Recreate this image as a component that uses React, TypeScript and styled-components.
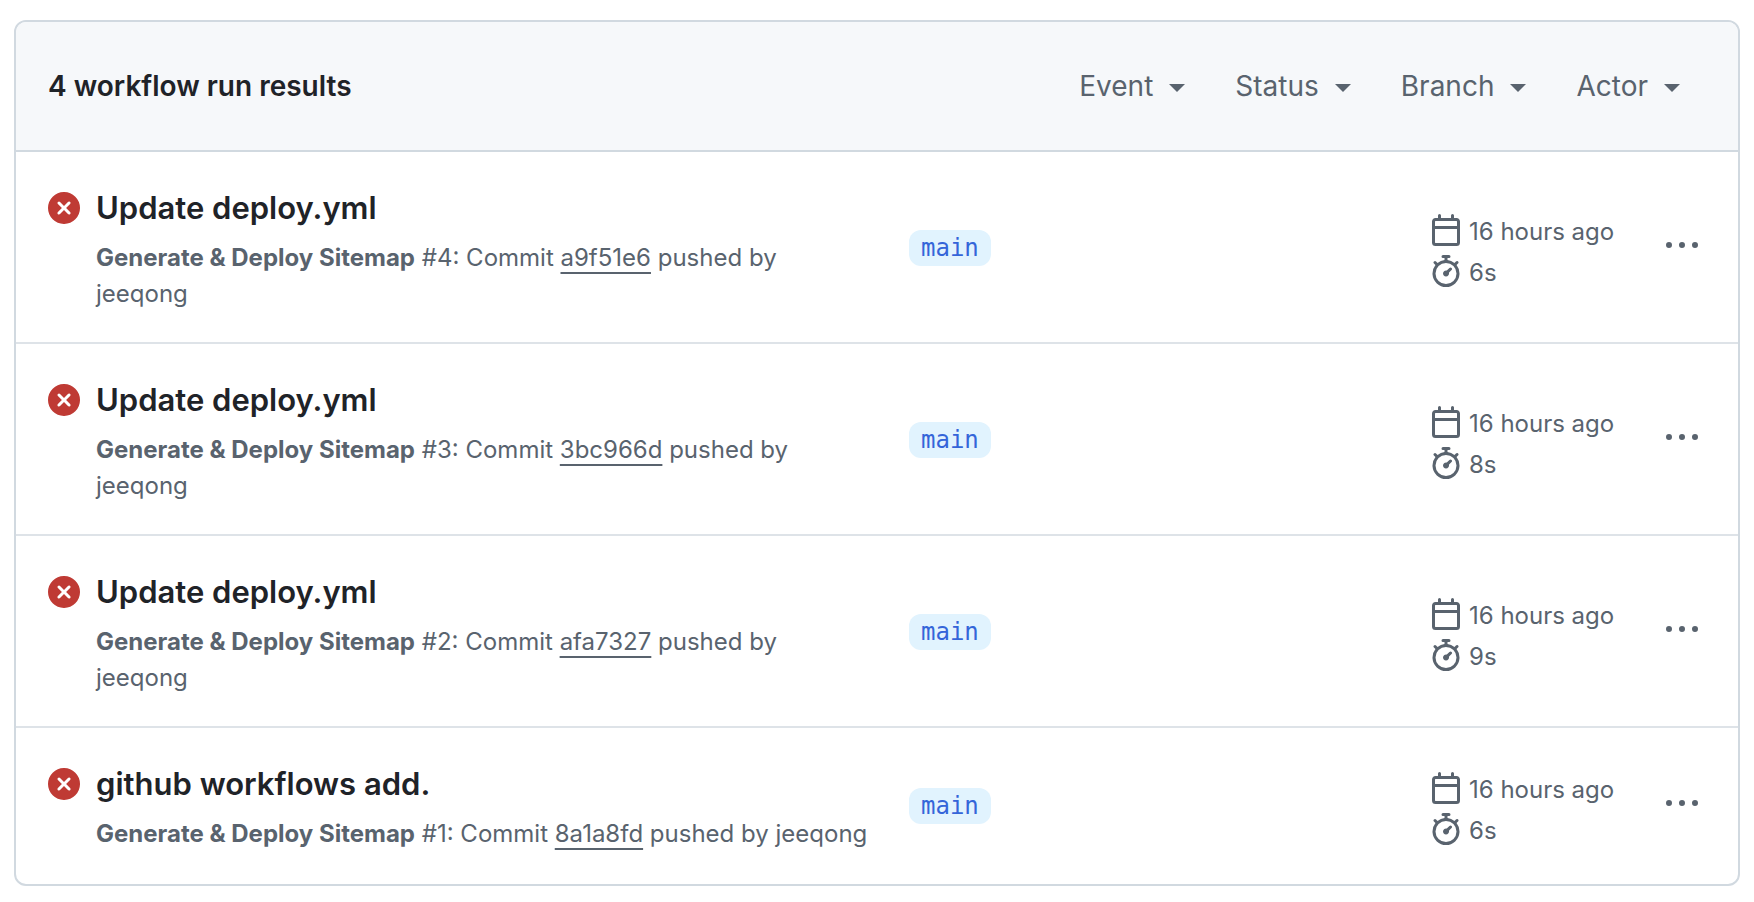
import React from 'react';
import styled, { createGlobalStyle } from 'styled-components';

const color = {
  text: '#1f2328',
  muted: '#59636e',
  border: '#d1d9e0',
  divider: '#dee3e8',
  header: '#f6f8fa',
  danger: '#bf3a34',
  labelBg: '#e1f3fe',
  labelText: '#3465d9',
};

const GlobalStyle = createGlobalStyle`
  *, *::before, *::after { box-sizing: border-box; }
  body {
    margin: 0;
    background: #ffffff;
    color: ${color.text};
    font-family: Inter, 'Liberation Sans', sans-serif;
  }
`;

const Page = styled.main`
  padding: 20px 14px 16px;
`;

const Box = styled.section`
  border: 2px solid ${color.border};
  border-radius: 12px;
  overflow: hidden;
`;

const Header = styled.header`
  display: flex;
  align-items: center;
  justify-content: space-between;
  gap: 32px;
  padding: 40px 58px 40px 32px;
  background: ${color.header};
  border-bottom: 2px solid ${color.border};
`;

const Heading = styled.h2`
  margin: 0;
  font-size: 28px;
  line-height: 48px;
  font-weight: 600;
`;

const Filters = styled.nav`
  display: flex;
  gap: 50px;
`;

const FilterButton = styled.button`
  display: flex;
  align-items: center;
  gap: 16px;
  padding: 0;
  border: 0;
  background: none;
  color: ${color.muted};
  font-family: inherit;
  font-size: 28px;
  line-height: 48px;
  cursor: pointer;

  &::after {
    content: '';
    margin-top: 4px;
    border: 8px solid transparent;
    border-top-color: currentColor;
    border-bottom: 0;
  }
`;

const RunList = styled.ul`
  margin: 0;
  padding: 0;
  list-style: none;
`;

const RunRow = styled.li`
  display: grid;
  grid-template-columns: minmax(0, 1fr) minmax(0, 1fr);
  align-items: center;
  padding: 32px 32px 30px;
  border-bottom: 2px solid ${color.divider};

  &:last-child {
    padding-bottom: 32px;
    border-bottom: 0;
  }
`;

const Summary = styled.div`
  display: flex;
  align-items: flex-start;
  gap: 16px;
  padding-right: 6px;
`;

const StatusIcon = styled.svg`
  flex: none;
  width: 32px;
  height: 32px;
  margin-top: 8px;
  fill: ${color.danger};
`;

const Title = styled.a`
  display: block;
  margin-bottom: 8px;
  color: ${color.text};
  font-size: 31px;
  line-height: 48px;
  font-weight: 600;
  text-decoration: none;
`;

const Description = styled.p`
  margin: 0;
  color: ${color.muted};
  font-size: 24px;
  line-height: 36px;
`;

const Workflow = styled.strong`
  font-weight: 700;
`;

const CommitLink = styled.a`
  color: inherit;
  text-decoration: underline;
  text-decoration-thickness: 2px;
  text-underline-offset: 6px;
  text-decoration-skip-ink: none;
`;

const ActorLink = styled.a`
  color: inherit;
  text-decoration: none;
`;

const Details = styled.div`
  display: flex;
  align-items: center;
  justify-content: space-between;
  padding-left: 32px;
`;

const BranchLabel = styled.a`
  padding: 0 12px;
  border-radius: 12px;
  background: ${color.labelBg};
  color: ${color.labelText};
  font-family: 'DejaVu Sans Mono', 'Liberation Mono', monospace;
  font-size: 24px;
  line-height: 36px;
  text-decoration: none;
`;

const Meta = styled.div`
  display: flex;
  align-items: center;
`;

const Timing = styled.div`
  width: 228px;
  padding-top: 5px;
  color: ${color.muted};
  font-size: 24px;
  line-height: 38px;
`;

const TimingLine = styled.div`
  display: flex;
  align-items: center;
  gap: 7px;
`;

const TimingText = styled.span`
  padding-top: 3px;
`;

const MetaIcon = styled.svg`
  flex: none;
  width: 32px;
  height: 32px;
  fill: ${color.muted};
`;

const MenuButton = styled.button`
  display: flex;
  padding: 8px 8px 14px;
  border: 0;
  background: none;
  cursor: pointer;
`;

type Run = { id: number; title: string; sha: string; duration: string };

const runs: Run[] = [
  { id: 4, title: 'Update deploy.yml', sha: 'a9f51e6', duration: '6s' },
  { id: 3, title: 'Update deploy.yml', sha: '3bc966d', duration: '8s' },
  { id: 2, title: 'Update deploy.yml', sha: 'afa7327', duration: '9s' },
  { id: 1, title: 'github workflows add.', sha: '8a1a8fd', duration: '6s' },
];

const filters = ['Event', 'Status', 'Branch', 'Actor'];

const FailedIcon = () => (
  <StatusIcon viewBox="0 0 16 16" role="img" aria-label="Failed">
    <path d="M2.343 13.657A8 8 0 1 1 13.658 2.343 8 8 0 0 1 2.343 13.657ZM6.03 4.97a.751.751 0 0 0-1.042.018.751.751 0 0 0-.018 1.042L6.94 8 4.97 9.97a.749.749 0 0 0 .326 1.275.749.749 0 0 0 .734-.215L8 9.06l1.97 1.97a.749.749 0 0 0 1.275-.326.749.749 0 0 0-.215-.734L9.06 8l1.97-1.97a.749.749 0 0 0-.326-1.275.749.749 0 0 0-.734.215L8 6.94Z" />
  </StatusIcon>
);

const CalendarIcon = () => (
  <MetaIcon viewBox="0 0 16 16" aria-hidden="true">
    <path d="M4.75 0a.75.75 0 0 1 .75.75V2h5V.75a.75.75 0 0 1 1.5 0V2h1.25c.966 0 1.75.784 1.75 1.75v10.5A1.75 1.75 0 0 1 13.25 16H2.75A1.75 1.75 0 0 1 1 14.25V3.75C1 2.784 1.784 2 2.75 2H4V.75A.75.75 0 0 1 4.75 0ZM2.5 7.5v6.75c0 .138.112.25.25.25h10.5a.25.25 0 0 0 .25-.25V7.5Zm10.75-4H2.75a.25.25 0 0 0-.25.25V6h11V3.75a.25.25 0 0 0-.25-.25Z" />
  </MetaIcon>
);

const StopwatchIcon = () => (
  <MetaIcon viewBox="0 0 16 16" aria-hidden="true">
    <path d="M5.75.75A.75.75 0 0 1 6.5 0h3a.75.75 0 0 1 0 1.5h-.75v1l-.001.041a6.724 6.724 0 0 1 3.464 1.435l.007-.006.75-.75a.749.749 0 0 1 1.275.326.749.749 0 0 1-.215.734l-.75.75-.006.007a6.75 6.75 0 1 1-10.548 0L2.72 5.03l-.75-.75a.751.751 0 0 1 .018-1.042.751.751 0 0 1 1.042-.018l.75.75.007.006A6.72 6.72 0 0 1 7.25 2.541V1.5H6.5a.75.75 0 0 1-.75-.75ZM8 14.5a5.25 5.25 0 1 0-.001-10.501A5.25 5.25 0 0 0 8 14.5Zm.389-6.7 1.33-1.33a.75.75 0 1 1 1.061 1.06L9.45 8.861A1.503 1.503 0 0 1 8 10.75a1.499 1.499 0 1 1 .389-2.95Z" />
  </MetaIcon>
);

const KebabIcon = () => (
  <MetaIcon viewBox="0 0 16 16" aria-hidden="true">
    <path d="M8 9.5a1.5 1.5 0 1 0 0-3 1.5 1.5 0 0 0 0 3ZM1.5 9.5a1.5 1.5 0 1 0 0-3 1.5 1.5 0 0 0 0 3Zm13 0a1.5 1.5 0 1 0 0-3 1.5 1.5 0 0 0 0 3Z" />
  </MetaIcon>
);

const WorkflowRun = ({ run }: { run: Run }) => (
  <RunRow>
    <Summary>
      <FailedIcon />
      <div>
        <Title href={`#run-${run.id}`}>{run.title}</Title>
        <Description>
          <Workflow>Generate &amp; Deploy Sitemap</Workflow> #{run.id}: Commit{' '}
          <CommitLink href={`#${run.sha}`}>{run.sha}</CommitLink> pushed by{' '}
          <ActorLink href="#jeeqong">jeeqong</ActorLink>
        </Description>
      </div>
    </Summary>
    <Details>
      <BranchLabel href="#main">main</BranchLabel>
      <Meta>
        <Timing>
          <TimingLine>
            <CalendarIcon />
            <TimingText>16 hours ago</TimingText>
          </TimingLine>
          <TimingLine>
            <StopwatchIcon />
            <TimingText>{run.duration}</TimingText>
          </TimingLine>
        </Timing>
        <MenuButton type="button" aria-label="Show options">
          <KebabIcon />
        </MenuButton>
      </Meta>
    </Details>
  </RunRow>
);

export default function App() {
  return (
    <>
      <GlobalStyle />
      <Page>
        <Box>
          <Header>
            <Heading>4 workflow run results</Heading>
            <Filters aria-label="Filters">
              {filters.map((name) => (
                <FilterButton key={name} type="button">
                  {name}
                </FilterButton>
              ))}
            </Filters>
          </Header>
          <RunList>
            {runs.map((run) => (
              <WorkflowRun key={run.id} run={run} />
            ))}
          </RunList>
        </Box>
      </Page>
    </>
  );
}
